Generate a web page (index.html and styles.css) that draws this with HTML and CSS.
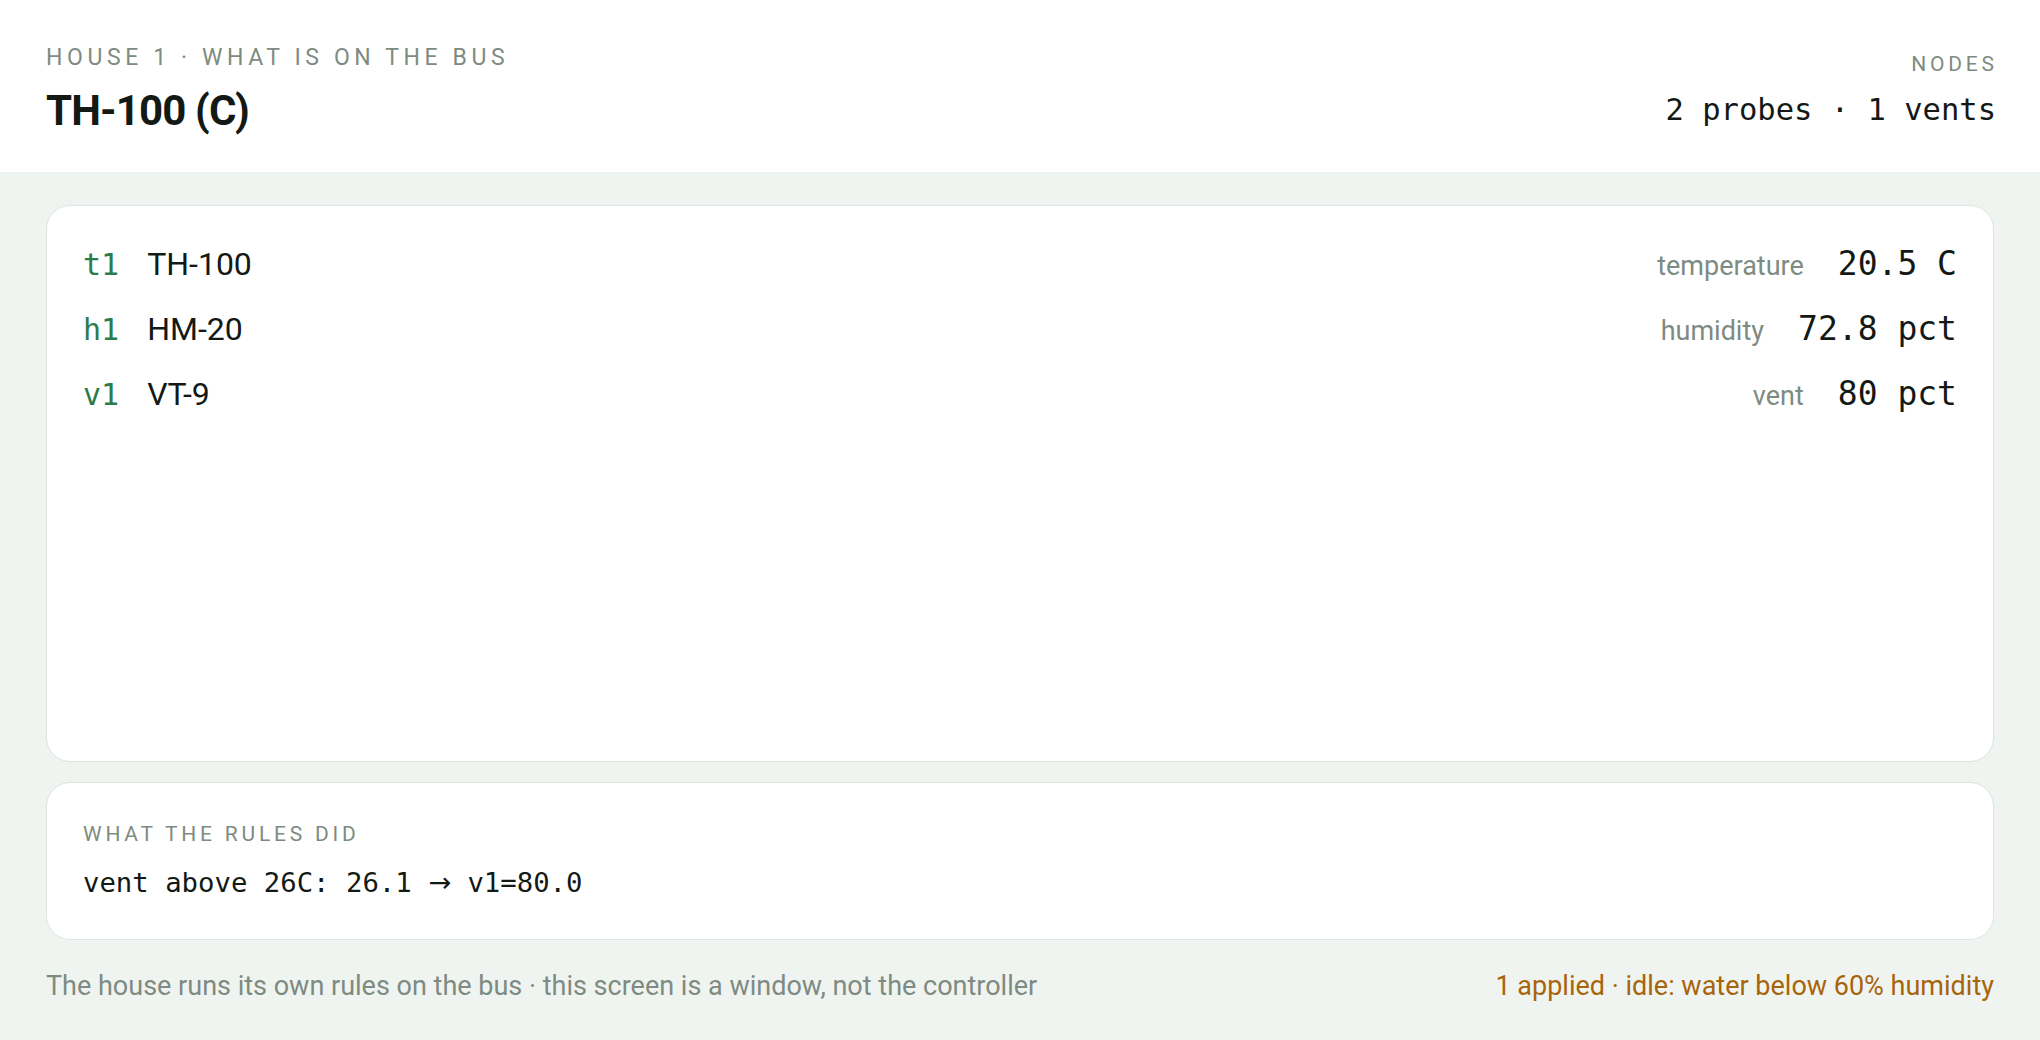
FILE: index.html
```html
<!DOCTYPE html>
<html lang="en">
<head>
<meta charset="utf-8">
<title>TH-100 (C)</title>
<link rel="stylesheet" href="styles.css">
</head>
<body>
<header class="top">
  <div class="top-left">
    <div class="eyebrow">HOUSE 1 · WHAT IS ON THE BUS</div>
    <h1 class="title">TH-100 (C)</h1>
  </div>
  <div class="top-right">
    <div class="eyebrow-sm eyebrow-right">NODES</div>
    <div class="counts">2 probes · 1 vents</div>
  </div>
</header>
<main class="main">
  <section class="card bus">
    <div class="row">
      <span class="key">t1</span>
      <span class="name">TH-100</span>
      <span class="label">temperature</span>
      <span class="value">20.5 C</span>
    </div>
    <div class="row">
      <span class="key">h1</span>
      <span class="name">HM-20</span>
      <span class="label">humidity</span>
      <span class="value">72.8 pct</span>
    </div>
    <div class="row">
      <span class="key">v1</span>
      <span class="name">VT-9</span>
      <span class="label">vent</span>
      <span class="value">80 pct</span>
    </div>
  </section>
  <section class="card rules">
    <div class="eyebrow-sm">WHAT THE RULES DID</div>
    <div class="rule">vent above 26C: 26.1 <span class="arrow">→</span> v1=80.0</div>
  </section>
  <footer class="foot">
    <span class="foot-note">The house runs its own rules on the bus · this screen is a window, not the controller</span>
    <span class="foot-status">1 applied · idle: water below 60% humidity</span>
  </footer>
</main>
</body>
</html>
```
FILE: styles.css
```css
* { box-sizing: border-box; }

html, body {
  margin: 0;
  height: 100%;
}

body {
  font-family: Roboto, "Liberation Sans", Arial, sans-serif;
  background: #f0f4f1;
  color: #131915;
  display: flex;
  flex-direction: column;
  height: 1040px;
  overflow: hidden;
}

.top {
  background: #ffffff;
  padding: 44px 46px 36px 46px;
  display: flex;
  justify-content: space-between;
  align-items: center;
}

.eyebrow {
  font-size: 23px;
  line-height: 1.2;
  letter-spacing: 0.2em;
  color: #7e8b82;
  margin-bottom: 14px;
}

.title {
  margin: 0;
  font-size: 42px;
  line-height: 1.2;
  font-weight: 700;
  letter-spacing: -0.02em;
  color: #131915;
}

.top-right {
  display: flex;
  flex-direction: column;
  align-items: flex-end;
  gap: 15px;
}

.eyebrow-sm {
  font-size: 21px;
  line-height: 1.2;
  letter-spacing: 0.18em;
  color: #7e8b82;
}

.eyebrow-right {
  margin-right: -0.18em;
}

.counts {
  font-family: "DejaVu Sans Mono", "Liberation Mono", monospace;
  font-size: 30.5px;
  line-height: 1.2;
  color: #131915;
  margin-right: -2px;
}

.main {
  flex: 1;
  display: flex;
  flex-direction: column;
  gap: 20px;
  padding: 33px 46px 34px 46px;
  min-height: 0;
}

.card {
  background: #ffffff;
  border: 1px solid #dde5e0;
  border-radius: 24px;
}

.bus {
  flex: 1;
  padding: 41px 36px;
}

.row {
  display: flex;
  align-items: baseline;
  height: 65px;
}

.row > span { line-height: 1; }

.key {
  font-family: "DejaVu Sans Mono", "Liberation Mono", monospace;
  font-size: 30px;
  color: #2d7a4b;
  margin-right: 28px;
}

.name {
  font-size: 32px;
  color: #131915;
  flex: 1;
}

.label {
  font-size: 27px;
  color: #7e8b82;
  margin-right: 34px;
}

.value {
  font-family: "DejaVu Sans Mono", "Liberation Mono", monospace;
  font-size: 33px;
  color: #131915;
}

.rules {
  padding: 39px 36px 36px 36px;
}

.rules .eyebrow-sm {
  margin-bottom: 17px;
}

.rule {
  font-family: "DejaVu Sans Mono", "Liberation Mono", monospace;
  font-size: 27.3px;
  line-height: 1.4;
  color: #131915;
}

.arrow {
  font-family: "DejaVu Sans", "Noto Sans", sans-serif;
}

.foot {
  display: flex;
  justify-content: space-between;
  font-size: 27px;
  line-height: 1.5;
  padding-top: 6px;
}

.foot-note { color: #7e8b82; }

.foot-status { color: #a8640b; }
```
